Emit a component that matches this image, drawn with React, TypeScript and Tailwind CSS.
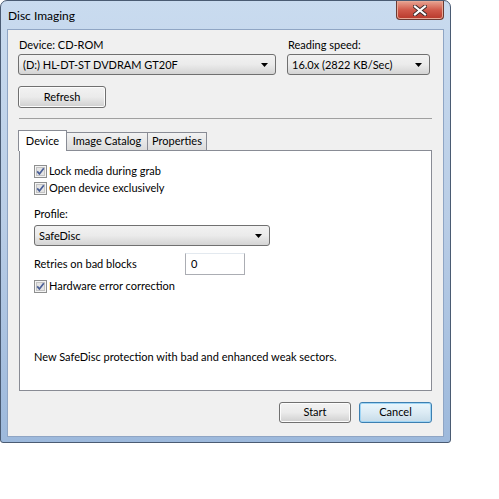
import type { ReactNode } from "react";

const font = { fontFamily: 'Lato, "Noto Sans", sans-serif' };

function Arrow() {
  return (
    <svg width="7" height="4" viewBox="0 0 7 4" className="shrink-0">
      <path d="M0 0 H7 L3.5 4 Z" fill="#000" />
    </svg>
  );
}

function Combo({ value, className }: { value: string; className: string }) {
  return (
    <div
      className={`flex items-center justify-between whitespace-nowrap rounded-[3px] border border-[#707070] bg-gradient-to-b from-[#f2f2f2] via-[#ebebeb] to-[#d4d4d4] pl-[4px] pr-[7px] text-[11px] text-black ${className}`}
    >
      <span className="leading-none">{value}</span>
      <Arrow />
    </div>
  );
}

function Button({ children, className, focused }: { children: ReactNode; className: string; focused?: boolean }) {
  return (
    <button
      type="button"
      className={`flex items-center justify-center rounded-[3px] border text-[11px] text-black ${
        focused
          ? "border-[#3c7fb1] bg-gradient-to-b from-[#eaf6fd] via-[#dcebf4] to-[#c6dbe8] shadow-[inset_0_0_0_1px_#9fd5f5]"
          : "border-[#707070] bg-gradient-to-b from-[#f2f2f2] via-[#ebebeb] to-[#cfcfcf] shadow-[inset_0_0_0_1px_#fcfcfc]"
      } ${className}`}
    >
      {children}
    </button>
  );
}

function Check({ label, className }: { label: string; className?: string }) {
  return (
    <div className={`flex h-[16px] items-center gap-[2px] whitespace-nowrap text-[11px] ${className ?? ""}`}>
      <svg width="13" height="13" viewBox="0 0 13 13" className="shrink-0">
        <rect x="0.5" y="0.5" width="12" height="12" fill="#f4f4f4" stroke="#8e8f8f" />
        <rect x="2.5" y="2.5" width="8" height="8" fill="#e4e4e4" stroke="#c3c3c3" />
        <path d="M3.2 6.4 L5.4 8.9 L9.8 3.2" fill="none" stroke="#4a5f97" strokeWidth="1.7" />
      </svg>
      <span>{label}</span>
    </div>
  );
}

export default function App() {
  return (
    <div className="h-[499px] w-[499px] bg-white" style={font}>
      {/* window frame */}
      <div className="flex h-[443px] w-[451px] flex-col rounded-t-[7px] rounded-b-[3px] border border-[#4a5b73] bg-gradient-to-b from-[#c9dbef] via-[#b9cde6] to-[#9db9dc] px-[6px] pb-[5px]">
        {/* title bar */}
        <div className="flex h-[28px] items-start justify-between">
          <span className="mt-[6px] pl-[1px] text-[12px] text-black">Disc Imaging</span>
          <div className="flex h-[19px] w-[48px] items-center justify-center rounded-b-[4px] border border-t-0 border-[#6b3a32] bg-gradient-to-b from-[#e8a493] via-[#d0594a] to-[#b8382a] shadow-[inset_0_0_0_1px_#e7a896]">
            <svg width="14" height="11" viewBox="0 0 14 11">
              <path d="M2 1.5 L12 9.5 M12 1.5 L2 9.5" stroke="#3a2a2a" strokeWidth="4" strokeLinecap="square" />
              <path d="M2 1.5 L12 9.5 M12 1.5 L2 9.5" stroke="#fff" strokeWidth="2.2" strokeLinecap="square" />
            </svg>
          </div>
        </div>

        {/* client area */}
        <div className="flex flex-1 flex-col border border-[#8fa5c4] bg-[#f0f0f0] px-[10px] pt-[7px] text-black">
          <div className="flex gap-[11px]">
            <div className="flex flex-col">
              <span className="mb-[1px] h-[16px] pl-[1px] text-[11px] leading-[16px]">Device: CD-ROM</span>
              <Combo value="(D:) HL-DT-ST DVDRAM GT20F" className="h-[21px] w-[258px]" />
            </div>
            <div className="flex flex-col">
              <span className="mb-[1px] h-[16px] pl-[1px] text-[11px] leading-[16px]">Reading speed:</span>
              <Combo value="16.0x (2822 KB/Sec)" className="h-[21px] w-[143px]" />
            </div>
          </div>

          <Button className="mt-[11px] h-[22px] w-[88px]">Refresh</Button>

          <div className="ml-[1px] mt-[10px] h-[2px] w-[413px] border-t border-[#a0a0a0] border-b-white" />

          {/* tabs */}
          <div className="mt-[10px] flex items-end whitespace-nowrap">
            <div className="relative z-10 -mb-[1px] flex h-[21px] w-[49px] items-start justify-center border border-b-0 border-[#898c95] bg-white pt-[2px] text-[11px]">
              Device
            </div>
            <div className="flex h-[18px] w-[81px] items-center justify-center border border-l-0 border-b-0 border-[#898c95] bg-gradient-to-b from-[#f2f2f2] to-[#dcdcdc] text-[11px]">
              Image Catalog
            </div>
            <div className="flex h-[18px] w-[59px] items-center justify-center border border-l-0 border-b-0 border-[#898c95] bg-gradient-to-b from-[#f2f2f2] to-[#dcdcdc] text-[11px]">
              Properties
            </div>
          </div>
          <div className="ml-[1px] flex h-[241px] w-[413px] flex-col border border-[#898c95] bg-white pl-[14px] pt-[12px] text-[11px]">
            <Check label="Lock media during grab" />
            <Check label="Open device exclusively" className="mt-[1px]" />
            <span className="mt-[10px] h-[16px] leading-[16px]">Profile:</span>
            <Combo value="SafeDisc" className="mt-[3px] h-[21px] w-[236px]" />
            <div className="mt-[7px] flex items-center">
              <span className="w-[151px]">Retries on bad blocks</span>
              <div className="flex h-[22px] w-[60px] items-center border border-[#abadb3] border-t-[#e3e9ef] pl-[5px]">0</div>
            </div>
            <Check label="Hardware error correction" className="mt-[3px]" />
            <span className="mt-[55px] whitespace-nowrap">New SafeDisc protection with bad and enhanced weak sectors.</span>
          </div>

          <div className="mt-[11px] flex justify-end gap-[8px] pr-[1px]">
            <Button className="h-[21px] w-[72px]">Start</Button>
            <Button focused className="h-[21px] w-[73px]">Cancel</Button>
          </div>
        </div>
      </div>
    </div>
  );
}
